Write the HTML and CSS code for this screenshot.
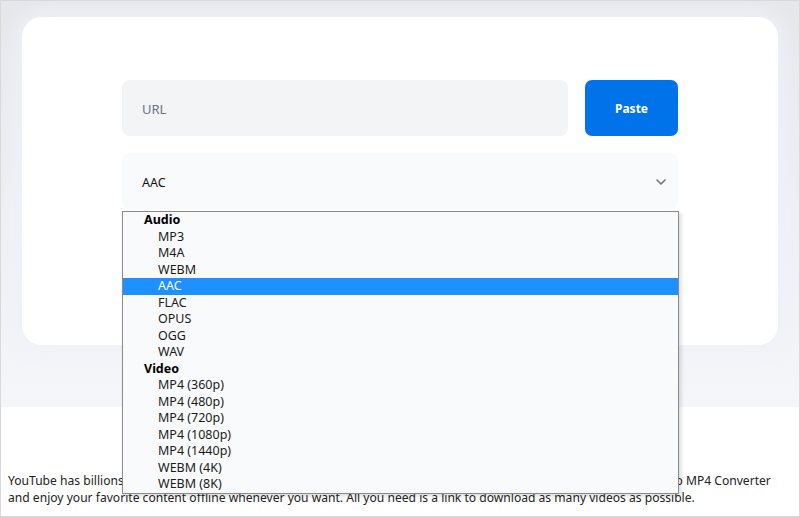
FILE: index.html
```html
<!DOCTYPE html>
<html lang="en">
<head>
<meta charset="utf-8">
<title>YouTube to MP4 Converter</title>
<link rel="stylesheet" href="styles.css">
</head>
<body>
<div class="frame">
  <section class="hero">
    <div class="card">
      <div class="form">
        <div class="url-row">
          <div class="url-input">URL</div>
          <button class="paste">Paste</button>
        </div>
        <div class="select">
          <span>AAC</span>
          <svg class="chev" width="12" height="8" viewBox="0 0 12 8"><path d="M2 2l4 4 4-4" fill="none" stroke="#6b7280" stroke-width="1.6" stroke-linecap="round" stroke-linejoin="round"/></svg>
        </div>
      </div>
    </div>
  </section>
  <section class="about">
    <p>YouTube has billions of videos, and now you can quickly download any of them for free with our best online YouTube to MP4 Converter and enjoy your favorite content offline whenever you want. All you need is a link to download as many videos as possible.</p>
  </section>
  <ul class="dropdown">
    <li class="group">Audio</li>
    <li>MP3</li>
    <li>M4A</li>
    <li>WEBM</li>
    <li class="active">AAC</li>
    <li>FLAC</li>
    <li>OPUS</li>
    <li>OGG</li>
    <li>WAV</li>
    <li class="group">Video</li>
    <li>MP4 (360p)</li>
    <li>MP4 (480p)</li>
    <li>MP4 (720p)</li>
    <li>MP4 (1080p)</li>
    <li>MP4 (1440p)</li>
    <li>WEBM (4K)</li>
    <li>WEBM (8K)</li>
  </ul>
</div>
</body>
</html>
```
FILE: styles.css
```css
* { box-sizing: border-box; }
html, body { margin: 0; padding: 0; }
body {
  font-family: "Noto Sans", "Open Sans", sans-serif;
  color: #111;
  background: #fff;
}
.frame {
  position: relative;
  width: 800px;
  height: 517px;
  border: 1px solid #d9d9d9;
  overflow: hidden;
}
.hero {
  height: 406px;
  padding: 16px 21px 0 21px;
  background: linear-gradient(180deg, #e5e7eb 0%, #eef0f4 55%, #f4f6fa 100%);
}
.card {
  height: 328px;
  background: #fff;
  border-radius: 20px;
  box-shadow: 0 0 18px 6px rgba(240, 242, 247, 0.9);
  padding-top: 63px;
  display: flex;
  justify-content: center;
}
.form {
  width: 556px;
  display: flex;
  flex-direction: column;
  gap: 17px;
}
.url-row {
  display: flex;
  gap: 17px;
  height: 56px;
}
.url-input {
  flex: 1;
  background: #f3f4f6;
  border-radius: 8px;
  padding: 2px 0 0 20px;
  display: flex;
  align-items: center;
  font-size: 13px;
  color: #6b7280;
}
.paste {
  width: 93px;
  border: none;
  border-radius: 7px;
  background: #0072ea;
  color: #fff;
  font-family: "Noto Sans", sans-serif;
  font-weight: 700;
  font-size: 12px;
  padding-top: 2px;
}
.select {
  height: 56px;
  background: #f9fafb;
  border-radius: 8px;
  padding: 2px 11px 0 20px;
  display: flex;
  align-items: center;
  justify-content: space-between;
  font-size: 12.5px;
  color: #111;
}
.about {
  padding: 65px 10px 0 7px;
}
.about p {
  margin: 0;
  font-size: 12.1px;
  line-height: 17px;
  color: #222;
}
.dropdown {
  position: absolute;
  left: 121px;
  top: 210px;
  width: 557px;
  height: 283px;
  margin: 0;
  padding: 0;
  list-style: none;
  background: #f9fafb;
  border: 1px solid #8a8a8a;
  box-shadow: 2px 2px 4px rgba(0, 0, 0, 0.15);
  font-size: 12.5px;
  color: #1a1a1a;
}
.dropdown li {
  height: 16.5px;
  line-height: 16.5px;
  padding-left: 35px;
  white-space: nowrap;
}
.dropdown li.group {
  padding-left: 21px;
  font-weight: 700;
  color: #000;
}
.dropdown li.active {
  background: #1e90ff;
  color: #fff;
}
```
